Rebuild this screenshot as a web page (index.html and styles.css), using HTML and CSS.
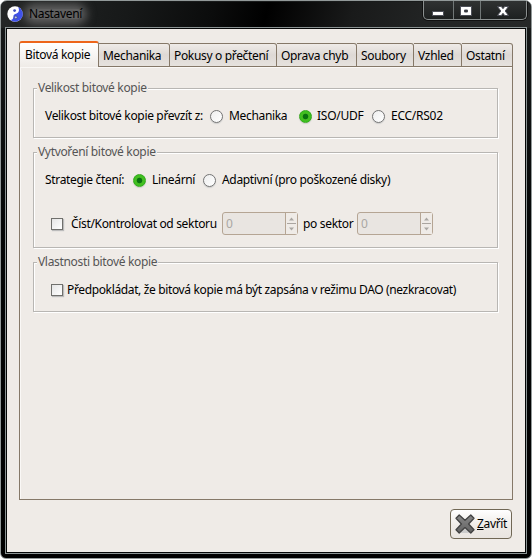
FILE: index.html
```html
<!DOCTYPE html>
<html lang="cs">
<head>
<meta charset="utf-8">
<title>Nastavení</title>
<link rel="stylesheet" href="styles.css">
</head>
<body>
<div class="window">
  <header class="titlebar">
    <svg class="logo" width="16" height="16" viewBox="0 0 16 16"><circle cx="8" cy="8" r="7.7" fill="#fff"/><path d="M10.5 .8A7.6 7.6 0 1 1 3.5 14C6.5 13.8 6.2 11.5 6.5 9.8C7 7.5 11.2 8 11.8 5C12.2 3 11.5 1.6 10.5 .8Z" fill="#4052e8"/><circle cx="7.6" cy="4.6" r="1.4" fill="#414fbd"/><circle cx="8.8" cy="11.4" r="1.4" fill="#bdc4ee" stroke="#333f80" stroke-width=".7"/></svg>
    <span class="title">Nastavení</span>
    <div class="controls">
      <span><svg width="12" height="12"><path d="M.5 6.5h11v4H.5z" fill="#fff" stroke="#4d4f58"/></svg></span>
      <span><svg width="12" height="12"><path d="M.5 1.5h11v9H.5zM4.5 5v2h3v-2z" fill="#fff" fill-rule="evenodd" stroke="#4d4f58"/></svg></span>
      <span><svg width="12" height="12"><path d="M.5 1.5h3.8L6 3.7l1.7-2.2h3.8L8.2 6l3.3 4.5H7.7L6 8.3l-1.7 2.2H.5L3.8 6z" fill="#fff" stroke="#4d4f58"/></svg></span>
    </div>
  </header>
  <main class="client">
    <nav class="tabs">
      <span class="tab active">Bitová kopie</span>
      <span class="tab t2">Mechanika</span>
      <span class="tab t3">Pokusy o přečtení</span>
      <span class="tab t4">Oprava chyb</span>
      <span class="tab t5">Soubory</span>
      <span class="tab t6">Vzhled</span>
      <span class="tab t7">Ostatní</span>
    </nav>
    <section class="panel">
      <fieldset class="group size">
        <legend>Velikost bitové kopie</legend>
        <div class="row source">
          <span>Velikost bitové kopie převzít z:</span>
          <i class="radio"></i><span>Mechanika</span>
          <i class="radio on"></i><span class="caps">ISO/UDF</span>
          <i class="radio"></i><span class="caps">ECC/RS02</span>
        </div>
      </fieldset>
      <fieldset class="group creation">
        <legend>Vytvoření bitové kopie</legend>
        <div class="row strategy">
          <span>Strategie čtení:</span>
          <i class="radio on"></i><span>Lineární</span>
          <i class="radio"></i><span>Adaptivní (pro poškozené disky)</span>
        </div>
        <div class="row range">
          <i class="check"></i><span>Číst/Kontrolovat od sektoru</span>
          <div class="spin"><span>0</span><div class="arrows"><svg width="11" height="21"><path d="M3 7.5h5L5.5 4.5zM3 14.5h5L5.5 17.5z" fill="#aaa7a3"/><path d="M1 10.5h9" stroke="#aaa5a0"/></svg></div></div>
          <span>po sektor</span>
          <div class="spin"><span>0</span><div class="arrows"><svg width="11" height="21"><path d="M3 7.5h5L5.5 4.5zM3 14.5h5L5.5 17.5z" fill="#aaa7a3"/><path d="M1 10.5h9" stroke="#aaa5a0"/></svg></div></div>
        </div>
      </fieldset>
      <fieldset class="group properties">
        <legend>Vlastnosti bitové kopie</legend>
        <div class="row dao"><i class="check"></i><span>Předpokládat, že bitová kopie má být zapsána v režimu DAO (nezkracovat)</span></div>
      </fieldset>
    </section>
    <footer>
      <div class="button">
        <svg width="20" height="20" viewBox="0 0 20 20"><defs><linearGradient id="x" x2="0" y2="1"><stop stop-color="#888"/><stop offset="1" stop-color="#626262"/></linearGradient></defs><ellipse cx="10" cy="17" rx="8" ry="2" fill="#ccc"/><path d="M4.2 1L10 6.2 15.8 1 19 4.2 13.6 10 19 15.8 15.8 19 10 13.6 4.2 19 1 15.8 6.4 10 1 4.2z" fill="url(#x)" stroke="#414141" stroke-width="1.3" stroke-linejoin="round"/></svg>
        <span><u>Z</u>avřít</span>
      </div>
    </footer>
  </main>
</div>
</body>
</html>
```
FILE: styles.css
```css
* { box-sizing: border-box; }
body { margin: 0; background: #fff; font: 12px/16px "Noto Sans", "Open Sans", sans-serif; letter-spacing: -.33px; color: #000; }
.window { width: 532px; height: 559px; padding: 1px 5px 5px; border: 1px solid #929999; border-radius: 7px 7px 6px 6px; background: linear-gradient(#191b1b, #050707 40%, #000); display: flex; flex-direction: column; overflow: hidden; }
.titlebar { height: 26px; margin: 0 -5px; padding: 4px 4px 0 6px; display: flex; background: linear-gradient(105deg, #242626 0, #171919 24%, #0b0c0c 40%, #000 50%, #191a1a 66%, #222424 80%, #262828); }
.logo { flex: none; position: relative; z-index: 1; }
.title { margin: 3px 0 0 6px; height: 10px; line-height: 10px; background: #606060; box-shadow: 0 0 10px 5px #606060; border-radius: 5px; }
.controls { margin: -5px 0 0 auto; height: 19px; display: flex; border: 1px solid #8b9090; border-top: 0; border-radius: 0 0 5px 5px; box-shadow: 0 0 0 1px #111; background: linear-gradient(#303232, #1d2020); }
.controls span { width: 30px; display: flex; align-items: center; padding: 1px 0 0 8px; border-right: 1px solid #717777; }
.controls span:nth-child(2) { width: 27px; padding-left: 6px; }
.controls span:last-child { width: 45px; border: 0; padding-left: 16px; }
.client { flex: 1; min-height: 0; border: 1px solid #050707; outline: 1px solid #8b9393; background: #efebe7; padding: 12px 12px 0; }
.tabs { height: 26px; display: flex; align-items: flex-end; position: relative; z-index: 1; margin-bottom: -1px; }
.tab { height: 24px; border: 1px solid #857868; border-left: 0; border-radius: 0 3px 0 0; background: linear-gradient(#efebe8, #ded9d5 50%, #e6e2de); padding: 4px 0 0 4px; white-space: nowrap; }
.tab.active { width: 80px; height: 26px; border-left: 1px solid #857868; border-top: 2px solid #ed651a; border-bottom: 0; border-radius: 3px 3px 0 0; background: linear-gradient(#fff, #efebe7); padding: 4px 0 0 5px; }
.t2 { width: 71px; } .t3 { width: 107px; } .t4 { width: 80px; } .t5 { width: 57px; } .t6 { width: 48px; } .t7 { width: 51px; }
.panel { width: 494px; height: 434px; border: 1px solid #857868; box-shadow: inset 1px 1px #faf8f6; padding: 21px 14px 0 13px; }
.group { position: relative; margin: 0; padding: 0; border: 1px solid #b8b6b3; box-shadow: inset 1px 1px #fff, 1px 1px #fff; min-width: 0; }
.group legend { position: absolute; left: 3px; top: -9px; padding: 0 1px; background: #efebe7; color: #555; }
.size { height: 50px; }
.creation { height: 96px; margin-top: 14px; }
.properties { height: 50px; margin-top: 14px; }
.row { display: grid; align-items: center; white-space: nowrap; }
.source { padding: 19px 0 0 11px; grid-template-columns: 165px 19px 70px 18px 55px 19px 60px; }
.strategy { padding: 19px 0 0 11px; grid-template-columns: 88px 19px 51px 19px 180px; }
.range { padding: 24px 0 0 17px; grid-template-columns: 20px 151px 81px 54px 76px; }
.dao { padding: 19px 0 0 17px; grid-template-columns: 16px 400px; letter-spacing: -.36px; }
.caps { letter-spacing: -.25px; }
.radio { width: 13px; height: 13px; border: 1px solid #747474; border-radius: 50%; background: linear-gradient(135deg, #eee, #fff); box-shadow: 0 1px 1px #ccc; }
.radio.on { border-color: #39a51d; background: radial-gradient(circle, #0a7110 0 2.4px, #45bd21 3.2px 4.5px, #23ce1d 6px); }
.check { width: 12px; height: 12px; border: 1px solid #70706d; background: linear-gradient(135deg, #e5e5e5, #fff); box-shadow: 1px 1px 1px #bbb; }
.spin { width: 76px; height: 23px; border: 1px solid #b5a594; border-radius: 3px; background: #e9e5e1; display: flex; color: #aaa7a3; }
.spin > span { flex: 1; padding: 3px 0 0 3px; }
.arrows { width: 12px; border-left: 1px solid #b5a594; background: #efebe7; }
.arrows svg { display: block; }
footer { display: flex; justify-content: flex-end; padding: 9px 1px 0 0; }
.button { width: 62px; height: 30px; display: flex; align-items: center; padding-left: 4px; border: 1px solid #706755; border-radius: 4px; background: linear-gradient(#fff, #efebe7 55%, #e9e5e1); }
.button span { margin-left: 2px; }
.button u { text-underline-offset: 1px; }
```
